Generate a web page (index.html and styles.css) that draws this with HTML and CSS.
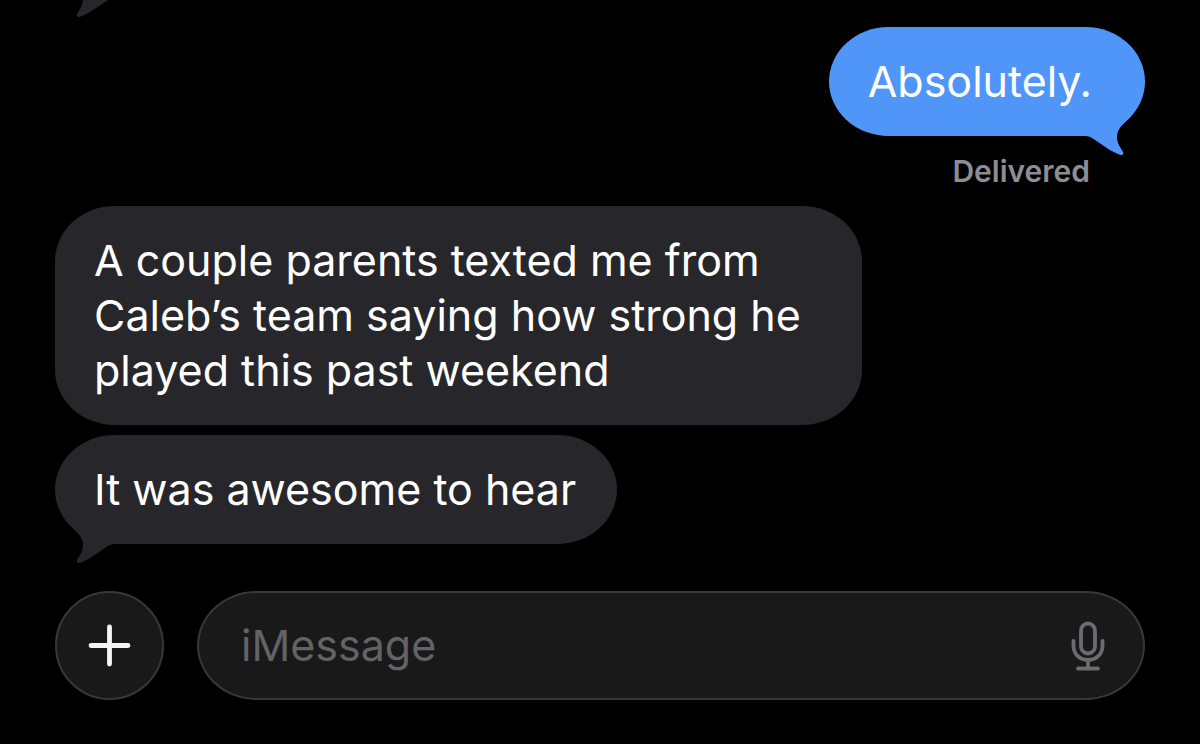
FILE: index.html
```html
<!DOCTYPE html>
<html lang="en">
<head>
  <meta charset="UTF-8">
  <title>Messages</title>
  <meta name="viewport" content="width=device-width, initial-scale=1.0">
  <link rel="stylesheet" href="styles.css">
</head>
<body>

  <svg class="defs" aria-hidden="true">
    <symbol id="tail" viewBox="0 0 50 50">
      <path d="M3 14C9 20 13 24 13 31C13 38 9 42 7 46C6 49 8 50 12 48C22 44 31 36 38 32C41 30 44 30 50 30V6H3Z"/>
    </symbol>
  </svg>

  <main class="thread">
    <div class="previous">
      <svg class="tail tail-left" aria-hidden="true"><use href="#tail"/></svg>
    </div>

    <div class="message sent">
      <p class="bubble">Absolutely.</p>
      <svg class="tail tail-right" aria-hidden="true"><use href="#tail"/></svg>
    </div>
    <p class="status">Delivered</p>

    <div class="message received">
      <p class="bubble">A couple parents texted me from Caleb’s team saying how strong he played this past weekend</p>
    </div>

    <div class="message received">
      <p class="bubble">It was awesome to hear</p>
      <svg class="tail tail-left" aria-hidden="true"><use href="#tail"/></svg>
    </div>
  </main>

  <form class="composer">
    <button type="button" class="add" aria-label="Add">
      <svg width="43" height="43" viewBox="0 0 43 43" aria-hidden="true">
        <path d="M21.500 3V40M3 21.500H40" stroke="#f5f5f5" stroke-width="4.8" stroke-linecap="round"/>
      </svg>
    </button>
    <div class="field">
      <input type="text" class="text" placeholder="iMessage" aria-label="iMessage">
      <button type="button" class="mic" aria-label="Dictate">
        <svg width="34" height="50" viewBox="0 0 34 50" fill="none" stroke="#6c6c70" stroke-width="3.8" stroke-linecap="round" aria-hidden="true">
          <rect x="10" y="2.500" width="14" height="30" rx="7"/>
          <path d="M2.500 20V24.500C2.500 33 8.500 39 17 39S31.500 33 31.500 24.500V20M17 39V47.500M7 47.500H27"/>
        </svg>
      </button>
    </div>
  </form>

</body>
</html>
```

FILE: styles.css
```css
body {
  margin: 0;
  padding: 0 55px;
  background-color: #000000;
  color: #ffffff;
  font-family: Inter, "Liberation Sans", sans-serif;
  overflow: hidden;
}

.defs {
  position: absolute;
  width: 0;
  height: 0;
}

.thread {
  display: flex;
  flex-direction: column;
}

/* bottom of the message scrolled off the top */
.previous {
  position: relative;
  height: 27px;
}

.message {
  position: relative;
  max-width: 74%;
}

.sent {
  align-self: flex-end;
}

.received {
  align-self: flex-start;
  margin-bottom: 10px;
}

.bubble {
  margin: 0;
  padding: 27px 41px 27px 39px;
  border-radius: 60px / 55px;
  font-size: 43px;
  line-height: 55px;
}

.sent .bubble {
  background-color: #4f96f8;
  padding-right: 53px;
}

.received .bubble {
  background-color: #27272b;
}

.tail {
  position: absolute;
  bottom: -20px;
  width: 50px;
  height: 50px;
}

.tail-left {
  left: 15px;
  fill: #27272b;
}

.previous .tail-left {
  bottom: 9px;
}

.tail-right {
  right: 15px;
  fill: #4f96f8;
  transform: scaleX(-1);
}

.status {
  align-self: flex-end;
  margin: 16px 55px 16px 0;
  font-size: 30px;
  line-height: 38px;
  font-weight: 600;
  color: #8d8d93;
}

.composer {
  display: flex;
  align-items: center;
  gap: 33px;
  margin-top: 37px;
}

.add,
.field {
  box-sizing: border-box;
  height: 109px;
  background-color: #191919;
  border: 2px solid #383838;
}

.add {
  display: flex;
  align-items: center;
  justify-content: center;
  flex: none;
  width: 109px;
  padding: 0;
  border-radius: 50%;
  cursor: pointer;
}

.field {
  display: flex;
  align-items: center;
  flex: 1;
  padding: 0 38px 0 42px;
  border-radius: 60px / 55px;
}

.text {
  flex: 1;
  min-width: 0;
  padding: 0;
  border: none;
  outline: none;
  background: none;
  color: #ffffff;
  font-family: inherit;
  font-size: 43px;
  line-height: 55px;
}

.text::placeholder {
  color: #626267;
  opacity: 1;
}

.mic {
  display: flex;
  padding: 0;
  border: none;
  background: none;
  cursor: pointer;
}
```
